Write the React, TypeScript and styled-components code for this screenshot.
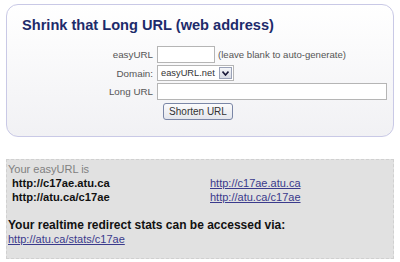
import React from 'react';
import styled, { createGlobalStyle } from 'styled-components';

const Global = createGlobalStyle`
  body {
    margin: 0;
    background: #ffffff;
    font-family: "Liberation Sans", Arial, sans-serif;
  }
`;

const Page = styled.div`
  width: 400px;
  height: 262px;
  overflow: hidden;
  padding: 4px 6px 0 6px;
  box-sizing: border-box;
`;

const Card = styled.div`
  height: 133px;
  box-sizing: border-box;
  border: 1px solid #c9c9e6;
  border-radius: 12px;
  background: linear-gradient(#ffffff, #f1f1f4);
  padding: 10px 6px 0 15px;
`;

const Title = styled.h1`
  margin: 0;
  font-size: 14.6px;
  font-weight: bold;
  color: #1d2b6b;
  line-height: 20px;
`;

const Form = styled.div`
  margin-top: 11px;
  display: grid;
  grid-template-columns: 131px 1fr;
  column-gap: 4px;
  row-gap: 2px;
  align-items: center;
`;

const Label = styled.label`
  text-align: right;
  font-size: 9.8px;
  color: #555;
`;

const Field = styled.div`
  display: flex;
  align-items: center;
  gap: 3px;
  font-size: 9.6px;
  color: #555;
`;

const TextBox = styled.input<{ $w: number }>`
  width: ${p => p.$w}px;
  height: 17px;
  box-sizing: border-box;
  border: 1px solid #b5b5b5;
  background: #fff;
  margin: 0;
  padding: 0 2px;
`;

const Select = styled.div`
  display: flex;
  align-items: center;
  justify-content: space-between;
  gap: 3px;
  width: 77px;
  height: 16px;
  box-sizing: border-box;
  border: 1px solid #b5b5b5;
  background: #fff;
  padding-left: 3px;
  font-size: 9.3px;
  color: #333;
  white-space: nowrap;
`;

const Arrow = styled.span`
  flex: none;
  width: 13px;
  height: 12px;
  box-sizing: border-box;
  border: 1px solid #9aa2b8;
  background: linear-gradient(#f5f6f9, #d8dbe4);
  margin-right: 1px;
  display: flex;
  align-items: center;
  justify-content: center;
`;

const Button = styled.button`
  grid-column: 2;
  justify-self: start;
  margin: 1px 0 0 6px;
  height: 17px;
  width: 70px;
  padding: 0;
  font-family: "Liberation Sans", Arial, sans-serif;
  font-size: 10px;
  color: #333;
  border: 1px solid #7a86a6;
  border-radius: 3px;
  background: linear-gradient(#fbfbfc, #e4e6ec);
`;

const Result = styled.div`
  margin-top: 22px;
  height: 100px;
  width: 388px;
  box-sizing: border-box;
  background: #e1e1e1;
  border: 1px dashed #d0d0d0;
  padding: 2px 0 0 1px;
  font-size: 11px;
  line-height: 14px;
`;

const Intro = styled.div`
  color: #808080;
`;

const LinkRow = styled.div`
  display: grid;
  grid-template-columns: 198px 1fr;
  padding-left: 4px;
`;

const Short = styled.span`
  font-weight: bold;
  font-size: 11.2px;
  color: #111;
`;

const Link = styled.a`
  color: #3a3a8c;
  text-decoration: underline;
`;

const Stats = styled.div`
  margin-top: 14px;
  font-weight: bold;
  font-size: 12px;
  color: #111;
`;

export default function App() {
  return (
    <>
      <Global />
      <Page>
        <Card>
          <Title>Shrink that Long URL (web address)</Title>
          <Form>
            <Label>easyURL</Label>
            <Field>
              <TextBox $w={58} />
              (leave blank to auto-generate)
            </Field>
            <Label>Domain:</Label>
            <Field>
              <Select>
                easyURL.net
                <Arrow>
                  <svg width="7" height="5" viewBox="0 0 7 5">
                    <path d="M0.5 0.5 L3.5 4 L6.5 0.5" fill="none" stroke="#1a1a3a" strokeWidth="1.6" />
                  </svg>
                </Arrow>
              </Select>
            </Field>
            <Label>Long URL</Label>
            <Field>
              <TextBox $w={230} />
            </Field>
            <Button>Shorten URL</Button>
          </Form>
        </Card>
        <Result>
          <Intro>Your easyURL is</Intro>
          <LinkRow>
            <Short>http://c17ae.atu.ca</Short>
            <Link href="#">http://c17ae.atu.ca</Link>
          </LinkRow>
          <LinkRow>
            <Short>http://atu.ca/c17ae</Short>
            <Link href="#">http://atu.ca/c17ae</Link>
          </LinkRow>
          <Stats>Your realtime redirect stats can be accessed via:</Stats>
          <Link href="#">http://atu.ca/stats/c17ae</Link>
        </Result>
      </Page>
    </>
  );
}
